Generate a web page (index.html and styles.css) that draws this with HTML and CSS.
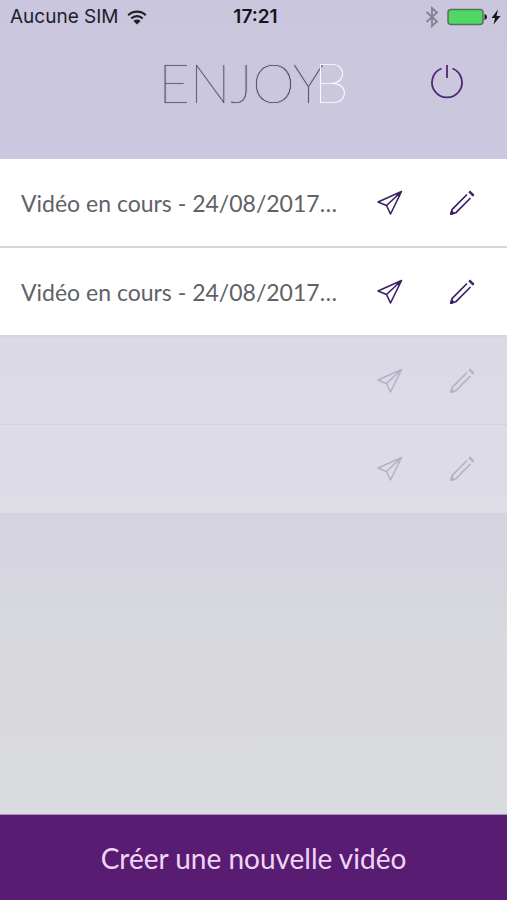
FILE: index.html
```html
<!DOCTYPE html>
<html lang="fr">
<head>
<meta charset="utf-8">
<meta name="viewport" content="width=device-width, initial-scale=1">
<title>EnjoyB</title>
<link rel="stylesheet" href="styles.css">
</head>
<body>
<svg width="0" height="0" class="sprite" aria-hidden="true">
  <symbol id="send" viewBox="0 0 28 28">
    <path d="M25.500 2.500 2 13 10.500 16.500 14.500 25ZM25.500 2.500 10.500 16.500" fill="none" stroke="currentColor" stroke-width="1.600" stroke-linejoin="round"/>
    <path d="M20 5.200 25.500 2.500 22.800 8Z" fill="currentColor"/>
  </symbol>
  <symbol id="pencil" viewBox="0 0 28 28">
    <path d="M19 5.500 4.200 20.300 2.800 25.200 7.700 23.800 22.500 9" fill="none" stroke="currentColor" stroke-width="1.700" stroke-linejoin="round"/>
    <path d="M2.500 25.500 3.600 21.500 6.500 24.400ZM20.800 3.200 22.200 2 26 5.800 24.800 7.200Z" fill="currentColor" stroke="currentColor" stroke-linejoin="round"/>
  </symbol>
</svg>
<div class="app">
  <div class="status">
    <div class="carrier">
      <span>Aucune SIM</span>
      <svg width="20" height="15" viewBox="0 0 20 15" aria-hidden="true">
        <path d="M1.200 5.300a12.500 12.500 0 0 1 17.600 0M4.300 8.600a8 8 0 0 1 11.400 0" fill="none" stroke="currentColor" stroke-width="2.200"/>
        <path d="M6.400 10.900a5.100 5.100 0 0 1 7.200 0L10 14.500Z" fill="currentColor"/>
      </svg>
    </div>
    <time>17:21</time>
    <div class="power-state">
      <svg class="bluetooth" width="14" height="22" viewBox="0 0 14 22" aria-hidden="true">
        <path d="M1.500 6 12 15.500 7 20V2L12 6.500 1.500 16" fill="none" stroke="currentColor" stroke-width="1.800"/>
      </svg>
      <svg width="54" height="18" viewBox="0 0 54 18" aria-hidden="true">
        <rect x="1" y="1.500" width="35" height="15" rx="3" fill="#4fd864" stroke="#55705f" stroke-width="1.500"/>
        <path d="M37.500 6q2.500 .5 2.500 3t-2.500 3Z" fill="#15151c"/>
        <path d="M51 1.500 44.500 10H48L46.500 16.500 53.500 8H49.500Z" fill="#15151c"/>
      </svg>
    </div>
  </div>
  <header class="header">
    <h1 class="logo">ENJOY<span>B</span></h1>
    <button class="logout" type="button" aria-label="Déconnexion">
      <svg width="36" height="36" viewBox="0 0 36 36" aria-hidden="true">
        <path d="M12.500 4.500a15 15 0 1 0 11 0M18 1V14" fill="none" stroke="currentColor" stroke-width="1.800"/>
      </svg>
    </button>
  </header>
  <main>
    <ul class="videos">
      <li class="video">
        <span class="title">Vidéo en cours - 24/08/2017…</span>
        <button type="button" aria-label="Envoyer"><svg width="28" height="28"><use href="#send"/></svg></button>
        <button type="button" aria-label="Modifier"><svg width="28" height="28"><use href="#pencil"/></svg></button>
      </li>
      <li class="video">
        <span class="title">Vidéo en cours - 24/08/2017…</span>
        <button type="button" aria-label="Envoyer"><svg width="28" height="28"><use href="#send"/></svg></button>
        <button type="button" aria-label="Modifier"><svg width="28" height="28"><use href="#pencil"/></svg></button>
      </li>
      <li class="video empty">
        <span class="title"></span>
        <button type="button" disabled aria-label="Envoyer"><svg width="28" height="28"><use href="#send"/></svg></button>
        <button type="button" disabled aria-label="Modifier"><svg width="28" height="28"><use href="#pencil"/></svg></button>
      </li>
      <li class="video empty">
        <span class="title"></span>
        <button type="button" disabled aria-label="Envoyer"><svg width="28" height="28"><use href="#send"/></svg></button>
        <button type="button" disabled aria-label="Modifier"><svg width="28" height="28"><use href="#pencil"/></svg></button>
      </li>
    </ul>
  </main>
  <button class="create" type="button">Créer une nouvelle vidéo</button>
</div>
</body>
</html>
```
FILE: styles.css
```css
* { box-sizing: border-box; }
body { margin: 0; font-family: Lato, "Liberation Sans", sans-serif; }
button { border: 0; padding: 0; background: none; font: inherit; cursor: pointer; }
svg { display: block; }
.sprite { position: absolute; }
.app {
  min-height: 100vh;
  display: flex;
  flex-direction: column;
  background: linear-gradient(#cac6de 0, #cbc8df 18%, #d4d3df 57%, #d8d8e0 70%, #d9d9dd 73%, #dadcdf 100%);
}
.status {
  height: 34px;
  padding: 0 6px 0 10px;
  display: grid;
  grid-template-columns: 1fr auto 1fr;
  align-items: center;
  font: 19px/20px Inter, "Liberation Sans", sans-serif;
  color: #20202b;
}
.status time { font-weight: 600; color: #15151c; }
.carrier, .power-state { display: flex; align-items: center; gap: 8px; }
.power-state { justify-content: flex-end; }
.bluetooth { color: #83818f; }
.header {
  height: 125px;
  padding: 0 42px 29px 78px;
  display: grid;
  grid-template-columns: 1fr 36px;
  align-items: center;
}
.logo {
  margin: 0;
  text-align: center;
  font-size: 54px;
  line-height: 64px;
  font-weight: 100;
  color: #45436a;
  text-shadow: 0 0 1px currentColor;
}
.logo span { margin-left: -10px; font-size: 56px; color: #fff; }
.logout { color: #532675; }
.videos { list-style: none; margin: 0; padding: 0; }
.video {
  height: 89px;
  padding: 0 9px 0 21px;
  display: flex;
  align-items: center;
  background: #fff;
  border-bottom: 2px solid #d6d5da;
  color: #3b2068;
}
.title { flex: 1; font-size: 23px; line-height: 30px; color: #606266; white-space: nowrap; }
.video button { width: 72px; height: 72px; display: grid; place-items: center; color: inherit; }
.empty {
  height: 88px;
  background: rgba(255, 255, 255, .24);
  border-bottom: 1px solid #d3d1de;
  color: #b6b1c6;
}
.empty:last-child { border-bottom: 0; }
.create {
  margin-top: auto;
  height: 86px;
  border-top: 1px solid #a98dbd;
  background: #591c73;
  color: #f0d6f5;
  font-size: 28px;
  line-height: 36px;
}
```
